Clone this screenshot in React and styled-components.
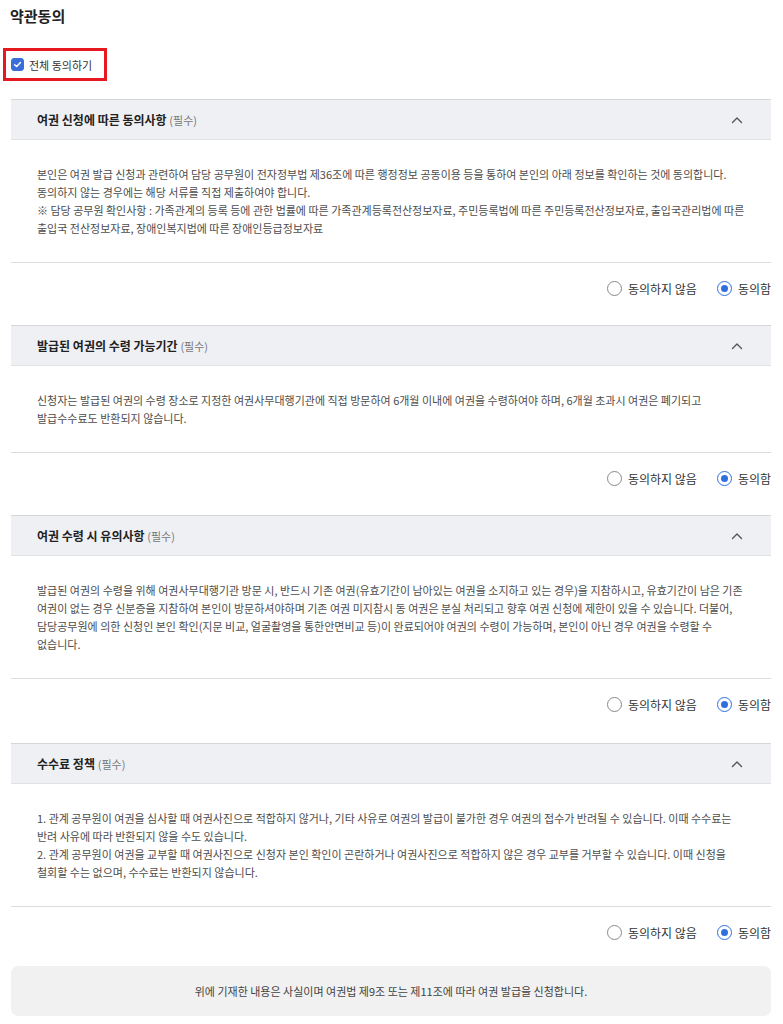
import React, { useState } from 'react'
import styled, { createGlobalStyle } from 'styled-components'

const GlobalStyle = createGlobalStyle`
  body {
    margin: 0;
    background: #fff;
    font-family: "Noto Sans CJK KR", "Noto Sans", sans-serif;
    color: #333;
  }
`

const Page = styled.div`
  width: 760px;
  padding: 0 12px 8px 11px;
`

const Title = styled.h2`
  margin: 0 0 0 -1px;
  font-size: 15px;
  line-height: 32px;
  font-weight: 700;
  color: #222;
`

const AllAgree = styled.label`
  display: inline-flex;
  align-items: center;
  gap: 5px;
  box-sizing: border-box;
  height: 33px;
  width: 104px;
  margin: 16px 0 18px -8px;
  padding-left: 5px;
  border: 3px solid #e61920;
  font-size: 11px;
  color: #333;
  cursor: pointer;
`

const CheckBox = styled.span`
  display: inline-flex;
  align-items: center;
  justify-content: center;
  width: 13px;
  height: 13px;
  border-radius: 3px;
  background: ${props => (props.checked ? '#3a6fd8' : '#fff')};
  border: 1px solid ${props => (props.checked ? '#3a6fd8' : '#999')};
  box-sizing: border-box;
`

const Section = styled.section`
  margin-bottom: 12px;
  &:nth-of-type(3) {
    margin-bottom: 14px;
  }
`

const Header = styled.div`
  display: flex;
  align-items: center;
  justify-content: space-between;
  box-sizing: border-box;
  height: 41px;
  padding: 0 22px 0 26px;
  background: #eef0f4;
  border-top: 1px solid #d4d6da;
  border-bottom: 1px solid #e0e2e6;
`

const HeaderTitle = styled.div`
  font-size: 12px;
  font-weight: 700;
  color: #222;
  span {
    font-size: 11px;
    font-weight: 400;
    color: #777;
  }
`

const Body = styled.div`
  padding: 25px 26px;
  font-size: 11px;
  line-height: 18px;
  color: #4d4d4d;
  word-break: keep-all;
  border-bottom: 1px solid #dcdcdc;
  p {
    margin: 0;
  }
`

const RadioRow = styled.div`
  display: flex;
  justify-content: flex-end;
  align-items: center;
  gap: 20px;
  height: 50px;
`

const RadioLabel = styled.label`
  display: inline-flex;
  align-items: center;
  gap: 6px;
  font-size: 12px;
  color: #333;
  cursor: pointer;
`

const RadioCircle = styled.span`
  display: inline-flex;
  align-items: center;
  justify-content: center;
  box-sizing: border-box;
  width: 15px;
  height: 15px;
  border-radius: 50%;
  border: 1px solid ${props => (props.checked ? '#2f6fe0' : '#8a8a8a')};
  &::after {
    content: '';
    display: ${props => (props.checked ? 'block' : 'none')};
    width: 7px;
    height: 7px;
    border-radius: 50%;
    background: #2f6fe0;
  }
`

const Footer = styled.div`
  margin-top: -3px;
  height: 50px;
  display: flex;
  align-items: center;
  justify-content: center;
  background: #f1f1f1;
  border-radius: 7px;
  font-size: 11px;
  color: #444;
`

const terms = [
  {
    title: '여권 신청에 따른 동의사항',
    lines: [
      '본인은 여권 발급 신청과 관련하여 담당 공무원이 전자정부법 제36조에 따른 행정정보 공동이용 등을 통하여 본인의 아래 정보를 확인하는 것에 동의합니다.',
      '동의하지 않는 경우에는 해당 서류를 직접 제출하여야 합니다.',
      '※ 담당 공무원 확인사항 : 가족관계의 등록 등에 관한 법률에 따른 가족관계등록전산정보자료, 주민등록법에 따른 주민등록전산정보자료, 출입국관리법에 따른 출입국 전산정보자료, 장애인복지법에 따른 장애인등급정보자료',
    ],
  },
  {
    title: '발급된 여권의 수령 가능기간',
    lines: [
      '신청자는 발급된 여권의 수령 장소로 지정한 여권사무대행기관에 직접 방문하여 6개월 이내에 여권을 수령하여야 하며, 6개월 초과시 여권은 폐기되고 발급수수료도 반환되지 않습니다.',
    ],
  },
  {
    title: '여권 수령 시 유의사항',
    lines: [
      '발급된 여권의 수령을 위해 여권사무대행기관 방문 시, 반드시 기존 여권(유효기간이 남아있는 여권을 소지하고 있는 경우)을 지참하시고, 유효기간이 남은 기존 여권이 없는 경우 신분증을 지참하여 본인이 방문하셔야하며 기존 여권 미지참시 동 여권은 분실 처리되고 향후 여권 신청에 제한이 있을 수 있습니다. 더불어, 담당공무원에 의한 신청인 본인 확인(지문 비교, 얼굴촬영을 통한안면비교 등)이 완료되어야 여권의 수령이 가능하며, 본인이 아닌 경우 여권을 수령할 수 없습니다.',
    ],
  },
  {
    title: '수수료 정책',
    lines: [
      '1. 관계 공무원이 여권을 심사할 때 여권사진으로 적합하지 않거나, 기타 사유로 여권의 발급이 불가한 경우 여권의 접수가 반려될 수 있습니다. 이때 수수료는 반려 사유에 따라 반환되지 않을 수도 있습니다.',
      '2. 관계 공무원이 여권을 교부할 때 여권사진으로 신청자 본인 확인이 곤란하거나 여권사진으로 적합하지 않은 경우 교부를 거부할 수 있습니다. 이때 신청을 철회할 수는 없으며, 수수료는 반환되지 않습니다.',
    ],
  },
]

function Chevron() {
  return (
    <svg width="24" height="12" viewBox="0 0 24 12" fill="none">
      <path d="M7.5 8.5 L12 4 L16.5 8.5" stroke="#555" strokeWidth="1.4" strokeLinecap="round" strokeLinejoin="round" />
    </svg>
  )
}

function Check() {
  return (
    <svg width="9" height="9" viewBox="0 0 10 10" fill="none">
      <path d="M1.8 5.2 L4 7.3 L8.3 2.8" stroke="#fff" strokeWidth="1.6" strokeLinecap="round" strokeLinejoin="round" />
    </svg>
  )
}

function TermSection({ term, value, onChange }) {
  return (
    <Section>
      <Header>
        <HeaderTitle>
          {term.title} <span>(필수)</span>
        </HeaderTitle>
        <Chevron />
      </Header>
      <Body>
        {term.lines.map((line, i) => (
          <p key={i}>{line}</p>
        ))}
      </Body>
      <RadioRow>
        <RadioLabel onClick={() => onChange(false)}>
          <RadioCircle checked={!value} />
          동의하지 않음
        </RadioLabel>
        <RadioLabel onClick={() => onChange(true)}>
          <RadioCircle checked={value} />
          동의함
        </RadioLabel>
      </RadioRow>
    </Section>
  )
}

export default function App() {
  const [agree, setAgree] = useState(terms.map(() => true))
  const all = agree.every(Boolean)

  return (
    <>
      <GlobalStyle />
      <Page>
        <Title>약관동의</Title>
        <AllAgree onClick={() => setAgree(terms.map(() => !all))}>
          <CheckBox checked={all}>{all && <Check />}</CheckBox>
          전체 동의하기
        </AllAgree>
        {terms.map((term, i) => (
          <TermSection
            key={i}
            term={term}
            value={agree[i]}
            onChange={v => setAgree(agree.map((a, j) => (j === i ? v : a)))}
          />
        ))}
        <Footer>위에 기재한 내용은 사실이며 여권법 제9조 또는 제11조에 따라 여권 발급을 신청합니다.</Footer>
      </Page>
    </>
  )
}
